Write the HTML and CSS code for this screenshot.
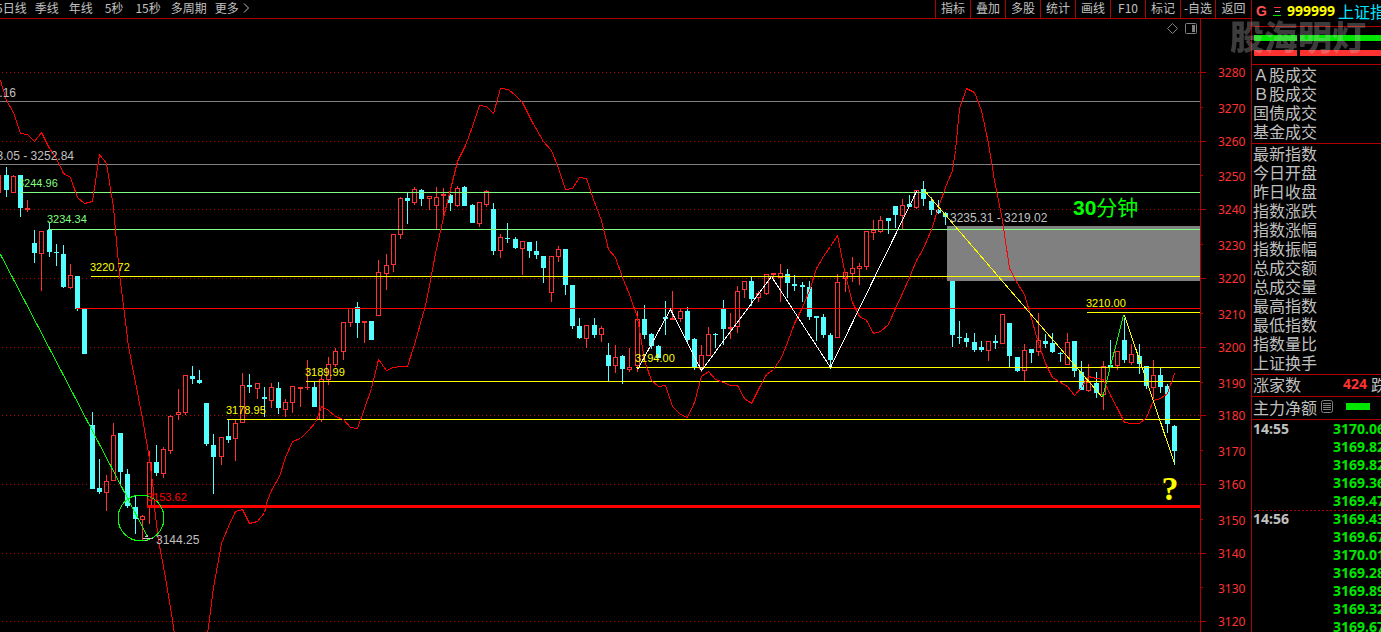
FILE: index.html
```html
<!DOCTYPE html>
<html lang="zh-CN">
<head>
<meta charset="utf-8">
<title>上证指数 999999</title>
<link rel="stylesheet" href="styles.css">
</head>
<body>
<div class="app">
  <main class="main">
    <header class="toolbar">
      <nav class="periods">
        <button type="button">5日线</button>
        <button type="button">季线</button>
        <button type="button" class="wide">年线</button>
        <button type="button" class="wide">5秒</button>
        <button type="button" class="wide">15秒</button>
        <button type="button">多周期</button>
        <button type="button" class="more">更多
          <svg width="7" height="10" viewBox="0 0 7 10" aria-hidden="true"><path d="M1 .5 5.5 5 1 9.5"/></svg>
        </button>
      </nav>
      <nav class="tools">
        <button type="button">指标</button>
        <button type="button">叠加</button>
        <button type="button">多股</button>
        <button type="button">统计</button>
        <button type="button">画线</button>
        <button type="button">F10</button>
        <button type="button">标记</button>
        <button type="button">-自选</button>
        <button type="button">返回</button>
      </nav>
    </header>
    <svg class="chart" viewBox="0 19 1251 613" role="img" aria-label="30分钟K线图">
      <g id="grid"></g>
      <rect class="gap" x="947" y="226" width="253" height="55"/>
      <g id="candles"></g>
      <g id="levels"></g>
      <g id="curves"></g>
      <g id="axis"></g>
      <circle class="trend green" cx="141" cy="518" r="23"/>
      <path class="mark" d="M143 538.500H153M147.500 535V537M145 536.500H147M145 540.500H147"/>
      <g class="corner">
        <path d="M1172.500 23.500 1177.500 28.500 1172.500 33.500 1167.500 28.500Z"/>
        <rect x="1185.500" y="23.500" width="11" height="10" rx="1"/>
        <rect class="solid" x="1192" y="25" width="3" height="7"/>
      </g>
      <g id="labels"></g>
    </svg>
  </main>

  <aside class="side">
    <div class="symbol">
      <span class="flag">G</span>
      <svg class="bars" width="9" height="10" viewBox="0 0 9 10" aria-hidden="true">
        <path class="r" d="M1 1.500h7"/><path class="w" d="M2 5.500h5"/><path class="g" d="M0 9.500h8"/>
      </svg>
      <span class="code">999999</span>
      <span class="name">上证指数</span>
    </div>
    <div class="meters">
      <div class="meter up"><i></i><i></i></div>
      <div class="meter down"><i></i><i></i></div>
      <div class="brand">股海明灯</div>
    </div>
    <ul class="stats">
      <li>Ａ股成交</li><li>Ｂ股成交</li><li>国债成交</li><li>基金成交</li>
    </ul>
    <ul class="stats">
      <li>最新指数</li><li>今日开盘</li><li>昨日收盘</li><li>指数涨跌</li>
      <li>指数涨幅</li><li>指数振幅</li><li>总成交额</li><li>总成交量</li>
      <li>最高指数</li><li>最低指数</li><li>指数量比</li><li>上证换手</li>
    </ul>
    <div class="breadth"><span>涨家数</span><b>424</b><span>跌</span></div>
    <div class="flow">
      <span>主力净额</span>
      <svg width="12" height="13" viewBox="0 0 12 13" aria-hidden="true"><rect x=".5" y=".5" width="11" height="12" rx="2"/><path d="M2 3.500h8M2 5.500h8M2 7.500h8M2 9.500h8"/></svg>
      <i></i>
    </div>
    <table class="ticks">
      <tbody>
        <tr><th scope="row">14:55</th><td>3170.06</td></tr>
        <tr><th></th><td>3169.82</td></tr>
        <tr><th></th><td>3169.82</td></tr>
        <tr><th></th><td>3169.36</td></tr>
        <tr><th></th><td>3169.47</td></tr>
      </tbody>
      <tbody class="minute">
        <tr><th scope="row">14:56</th><td>3169.43</td></tr>
        <tr><th></th><td>3169.67</td></tr>
        <tr><th></th><td>3170.01</td></tr>
        <tr><th></th><td>3169.28</td></tr>
        <tr><th></th><td>3169.89</td></tr>
        <tr><th></th><td>3169.32</td></tr>
        <tr><th></th><td>3169.67</td></tr>
      </tbody>
    </table>
  </aside>
</div>
<script src="chart.js"></script>
</body>
</html>
```
FILE: styles.css
```css
* { box-sizing: border-box; }

body {
  margin: 0;
  background: #000;
  color: #c0c0c0;
  font-family: "Noto Sans CJK SC", "Noto Sans", sans-serif;
  overflow: hidden;
}

.app {
  display: grid;
  grid-template-columns: minmax(0, 1fr) 130px;
  height: 100vh;
}

.main {
  display: flex;
  flex-direction: column;
  min-width: 0;
}

/* toolbar */
.toolbar {
  display: flex;
  justify-content: space-between;
  height: 19px;
  flex: none;
  border-bottom: 1px solid #b00000;
}

.toolbar button {
  padding: 0 0 2px;
  border: 0;
  background: none;
  color: inherit;
  font: 12px/16px "Noto Sans CJK SC", sans-serif;
  white-space: nowrap;
}

.periods {
  display: flex;
  gap: 8px;
  margin-left: -4px;
}

.periods .wide { padding: 0 2px 2px; }

.periods .more {
  display: flex;
  align-items: center;
  gap: 4px;
}

.more svg { fill: none; stroke: #c0c0c0; }

.tools {
  display: grid;
  grid-template-columns: repeat(8, 35px) 36px;
}

.tools button { border-left: 1px solid #b00000; }

/* chart */
.chart {
  display: block;
  width: 100%;
  height: auto;
  shape-rendering: crispEdges;
}

.grid { stroke: #b00000; stroke-dasharray: 1 3; }
.frame { fill: #b00000; }
.gap { fill: #808080; }
.candle-down { fill: #54ffff; }
.candle-up { fill: none; stroke: #ff3232; }
.wick-down { stroke: #54ffff; }
.wick-up { stroke: #ff3232; }
.trend { fill: none; }
.red { stroke: #f00; }
.green { stroke: #0f0; }
.white { stroke: #fff; }
.yellow { stroke: #ff0; }
.mark { fill: none; stroke: #c0c0c0; }
.corner { fill: none; stroke: #808080; shape-rendering: auto; }
.corner .solid { fill: #808080; stroke: none; }

.scale { fill: #ff3232; font: 12px "Noto Sans", sans-serif; }
.price { font: 11px "Liberation Sans", sans-serif; }
.note { fill: #c0c0c0; font: 12px "Liberation Sans", sans-serif; }
.title { fill: #0f0; font: 21px "Liberation Sans", "Noto Sans CJK SC", sans-serif; }
.title .num { font-weight: bold; }
.question { fill: #ff0; font: bold 34px "Liberation Serif", serif; }

/* quote panel */
.side {
  border-left: 1px solid #b00000;
  overflow: hidden;
  font-size: 16px;
  white-space: nowrap;
}

.symbol {
  display: flex;
  align-items: center;
  height: 27px;
  padding: 0 0 4px 4px;
  border-bottom: 1px solid #b00000;
  line-height: 22px;
}

.symbol > *, .breadth > * { flex: none; }

.flag { width: 17px; color: #ff5050; font: bold 14px "Liberation Sans", sans-serif; }
.bars { margin-right: 5px; }
.bars .r { stroke: #ff3232; }
.bars .w { stroke: #c0c0c0; }
.bars .g { stroke: #00e600; }
.code { width: 51px; color: #ff0; font: bold 14px/20px "Noto Sans", sans-serif; }
.name { color: #00e6ff; }

.meters {
  position: relative;
  display: flex;
  flex-direction: column;
  gap: 9px;
  height: 38px;
  padding: 8px 0 0 2px;
  border-bottom: 1px solid #b00000;
}

.meter { display: grid; grid-template-columns: 43px 1fr; gap: 3px; height: 6px; }
.up i { background: #00e600; }
.down i { background: #ff3232; }

.brand {
  position: fixed;
  right: 15px;
  top: 16px;
  color: rgba(200, 200, 200, .3);
  font-size: 34px;
  font-weight: 900;
  line-height: 40px;
}

.stats {
  margin: 0;
  padding: 0 1px 2px;
  border-bottom: 1px solid #b00000;
  list-style: none;
  line-height: 19px;
}

.breadth, .flow {
  display: flex;
  align-items: center;
  padding: 0 0 3px 1px;
  border-bottom: 1px solid #b00000;
  line-height: 18px;
}

.breadth { height: 22px; }
.breadth span:first-child { width: 90px; }
.breadth b { width: 28px; color: #ff3232; font: bold 14px/18px "Noto Sans", sans-serif; }

.flow { height: 23px; }
.flow svg { flex: none; margin: 0 13px 0 4px; fill: none; stroke: #808080; }
.flow i { flex: none; width: 24px; height: 7px; background: #00e600; }

.ticks {
  width: 100%;
  border-collapse: collapse;
  table-layout: fixed;
  font: bold 14px/18px "Noto Sans", sans-serif;
}

.ticks th, .ticks td { height: 18px; padding: 0; }
.ticks th { width: 81px; padding-left: 1px; text-align: left; }
.ticks td { color: #00e600; }

.minute {
  background: repeating-linear-gradient(to right, transparent 0 2px, #b00000 2px 4px) 0 0 / 100% 1px no-repeat;
}
```
FILE: chart.js
```js
// [x, high, low, bodyTop, bodyBottom, rising]
const candles = [
[-2,175,193,175,193,1],[6,167,197,175,190,0],[13,175,193,176,193,1],[20,175,217,175,208,0],[27,200,212,208,210,1],
[34,230,263,243,253,0],[41,231,291,231,254,1],[49,223,257,230,252,0],[56,244,266,252,253,0],[63,245,288,254,287,0],
[70,264,289,275,288,1],[77,276,311,276,309,0],[84,309,354,309,354,0],[92,412,489,425,489,0],[99,459,494,488,492,0],
[106,475,511,481,493,1],[113,423,481,435,481,1],[120,433,484,433,472,0],[127,469,508,474,506,0],[135,496,534,507,519,0],
[142,515,540,516,520,1],[149,451,524,462,506,1],[156,445,476,462,473,0],[163,447,478,449,474,1],[170,415,454,416,451,1],
[178,389,420,412,415,1],[185,375,415,375,413,1],[192,366,384,376,379,0],[199,370,384,380,383,0],[206,403,446,403,444,0],
[213,434,494,445,457,0],[221,437,465,437,457,1],[228,420,443,436,440,0],[235,420,461,423,439,1],[242,373,423,385,423,1],
[249,374,393,385,387,0],[257,383,399,383,389,1],[264,387,417,397,399,0],[271,383,408,387,401,1],[278,382,414,388,408,0],
[285,399,417,402,410,1],[292,386,413,386,403,1],[300,387,407,387,389,1],[307,360,390,387,388,1],[314,382,407,387,407,0],
[321,375,422,379,420,1],[328,357,385,364,380,1],[335,348,367,351,365,1],[343,322,360,322,352,1],[350,308,327,308,323,1],
[357,302,338,307,323,0],[364,321,343,321,323,1],[371,321,340,321,340,0],[378,260,316,272,316,1],[386,254,290,265,274,1],
[393,234,272,234,265,1],[400,197,239,198,235,1],[407,193,224,198,201,0],[414,187,205,189,203,1],[421,189,206,190,199,0],
[429,196,210,196,199,1],[436,187,229,197,206,1],[443,188,218,194,196,1],[450,194,211,195,203,0],[457,186,207,188,206,1],
[464,186,206,187,206,0],[472,204,223,205,223,0],[479,202,227,202,224,1],[486,190,207,191,205,1],[493,203,255,209,251,0],
[500,234,258,237,251,1],[507,223,243,238,239,0],[515,237,249,239,248,0],[522,241,275,241,249,1],[529,242,258,242,251,0],
[536,241,259,251,255,0],[543,256,283,256,268,0],[551,256,302,256,293,1],[558,246,262,249,257,1],[565,249,295,249,285,0],
[572,285,329,285,326,0],[579,318,339,326,338,0],[586,325,348,325,339,1],[594,318,338,325,335,0],[601,326,342,328,335,1],
[608,343,381,355,366,0],[615,345,373,357,366,1],[622,355,384,356,369,0],[629,348,372,367,370,1],[637,311,372,319,366,1],
[644,305,339,319,335,0],[651,333,349,334,346,0],[658,345,358,346,358,0],[665,301,335,317,319,0],[672,291,320,318,320,1],
[680,309,322,311,319,1],[687,307,344,311,340,0],[694,338,370,339,368,0],[701,345,372,355,369,1],[708,327,356,334,356,1],
[715,333,348,334,335,0],[723,300,345,309,329,0],[730,313,339,327,329,1],[737,286,333,291,327,1],[744,281,298,281,290,1],
[751,277,306,281,299,0],[758,291,302,293,298,1],[766,274,295,274,294,1],[773,273,279,273,275,1],[780,264,302,273,278,1],
[787,269,298,274,283,0],[794,275,291,284,286,0],[802,282,302,285,287,0],[809,281,320,287,317,0],[816,316,341,316,318,0],
[823,314,338,317,335,0],[830,333,369,335,360,0],[837,274,338,282,338,1],[845,272,292,272,279,1],[852,257,282,268,274,1],
[859,263,285,266,269,1],[866,231,270,231,267,1],[873,220,240,230,233,1],[880,216,233,220,232,1],[888,218,234,218,221,0],
[895,206,228,206,215,0],[902,199,229,205,216,1],[909,195,207,204,207,0],[916,190,209,190,208,1],[923,181,206,189,199,0],
[931,197,215,201,210,0],[938,200,214,210,213,0],[945,212,225,213,217,0],[952,281,347,281,335,0],[959,321,344,337,338,0],
[966,333,347,338,342,0],[974,333,352,342,350,0],[981,341,352,347,350,0],[988,341,361,341,351,1],[995,335,349,341,343,0],
[1002,314,344,314,344,1],[1009,323,368,323,356,0],[1017,357,372,357,371,0],[1024,344,381,350,371,1],[1031,349,363,349,353,0],
[1038,313,356,340,352,1],[1045,334,348,341,344,0],[1052,333,353,343,352,0],[1060,352,362,353,354,0],[1067,333,365,342,365,1],
[1074,341,377,341,371,0],[1081,361,390,372,390,0],[1088,364,392,382,391,1],[1096,372,398,383,393,0],[1103,361,410,366,395,1],
[1110,340,368,365,368,0],[1117,351,370,351,366,1],[1124,318,363,340,360,0],[1131,344,365,354,363,1],[1139,344,374,356,364,0],
[1146,366,389,366,386,0],[1153,360,399,375,388,1],[1160,368,393,375,387,0],[1167,384,433,386,424,0],[1174,425,465,426,451,0]
];

// [x1, y, thickness, colour]
const levels = [
[0,101,1,'#808080'],[0,164,1,'#808080'],[20,192,1,'#80ff80'],[48,229,1,'#80ff80'],[91,276,1,'#ffff00'],
[76,308,1,'#ff0000'],[636,367,1,'#ffff00'],[306,381,1,'#ffff00'],[227,419,1,'#ffff00'],[1087,312,1,'#ffff00'],
[147,505,3,'#ff0000']
];

const curves = [
['red','0,80 6,100 13,112 20,133 27,134 34,141 41,132 49,148 56,158 63,173 70,177 77,197 84,203 92,201 99,154 106,163 113,207 115,230 119,273 128,346 135,382 142,418 149,458 153,490 154,507 158,540 165,577 171,613 174,634'],
['red','207,634 213,587 221,543 228,526 235,511 242,509 249,523 257,521 264,512 267,500 271,490 279,476 285,457 292,441 300,438 308,430 315,422 321,406 328,410 335,416 343,419 350,427 357,428 364,408 371,388 378,359 386,370 393,367 400,366 407,366 414,344 425,305 430,280 435,253 443,217 450,189 457,161 465,145 472,126 479,105 486,106 493,113 500,88 508,89 515,95 522,102 532,122 543,141 551,150 558,168 565,189 572,188 579,177 586,178 593,199 601,220 608,249 615,257 622,277 629,294 637,317 644,360 651,380 658,386 665,385 672,406 680,414 687,417 694,402 701,376 708,371 715,379 723,382 730,385 737,385 744,398 751,403 759,387 766,374 773,369 781,357 787,342 794,323 802,307 809,290 816,268 823,256 830,246 837,235 845,275 852,302 859,316 866,320 873,333 880,331 888,324 895,308 902,293 909,277 916,260 923,248 931,229 938,207 945,187 952,170 955,150 959,108 966,88 974,92 981,110 988,143 994,180 1002,220 1009,268 1017,283 1024,294 1031,318 1038,343 1045,363 1052,377 1060,382 1067,386 1074,395 1081,387 1088,376 1096,378 1103,379 1110,395 1117,408 1124,422 1131,423 1139,423 1146,417 1153,400 1160,398 1167,393 1174,373'],
['green','0,254 147,536'],
['white','637,369 670,309 701,370 771,276 830,367 916,191'],
['yellow','923,189 1102,397'],
['green','1102,397 1123,315'],
['yellow','1124,315 1174,463']
];

// [x, baseline, text, class, fill, anchor]
const labels = [
[16,97,'.16','note','','end'],[74,160,'3.05 - 3252.84','note','','end'],
[18,187,'3244.96','price','#80ff80'],[47,223,'3234.34','price','#80ff80'],
[90,271,'3220.72','price','#ffff00'],[226,414,'3178.95','price','#ffff00'],
[305,376,'3189.99','price','#ffff00'],[635,362,'3194.00','price','#ffff00'],
[1086,307,'3210.00','price','#ffff00'],[147,501,'3153.62','price','#ff0000'],
[156,544,'3144.25','note'],[950,222,'3235.31 - 3219.02','note'],
[1170,500,'?','question','','middle']
];

const gridY = [72,141,209,278,347,415,484,553,621];
const minorY = [107,175,244,313,382,450,519,587];

const put = (id, html) => { document.getElementById(id).innerHTML = html; };
const rect = (x, y, w, h, attrs) => `<rect x="${x}" y="${y}" width="${w}" height="${h}" ${attrs}/>`;

put('grid', gridY.map(y => `<path class="grid" d="M2 ${y + .5}H1200"/>`).join(''));

put('candles', candles.map(([x, hi, lo, top, bottom, up]) => {
  const c = x + .5;
  const wick = `<path class="wick-${up ? 'up' : 'down'}" d="M${c} ${hi}V${top}M${c} ${bottom}V${lo}"/>`;
  const body = up
    ? rect(x - 1.5, top + .5, 4, bottom - top - 1, 'class="candle-up"')
    : rect(x - 2, top, 5, bottom - top, 'class="candle-down"');
  const flat = up && bottom - top === 1 ? `<path class="wick-up" d="M${x - 2} ${top + .5}h5"/>` : '';
  return wick + body + flat;
}).join(''));

put('levels', levels.map(([x, y, h, fill]) => rect(x, y, 1200 - x, h, `fill="${fill}"`)).join(''));

put('curves', curves.map(([cls, pts]) =>
  `<polyline class="trend ${cls}" transform="translate(.5 .5)" points="${pts}"/>`).join(''));

put('axis', rect(1200, 19, 1, 613, 'class="frame"')
  + gridY.map(y => rect(1201, y, 5, 1, 'class="frame"')).join('')
  + minorY.map(y => rect(1201, y, 2, 1, 'class="frame"')).join('')
  + Array.from({ length: 17 }, (_, i) => {
      const y = i % 2 ? minorY[(i - 1) / 2] + 1 : gridY[i / 2];
      return `<text class="scale" x="1218" y="${y + 5}">${3280 - i * 10}</text>`;
    }).join(''));

put('labels', labels.map(([x, y, text, cls, fill, anchor]) =>
  `<text class="${cls}" x="${x}" y="${y}"${fill ? ` fill="${fill}"` : ''} text-anchor="${anchor || 'start'}">${text}</text>`).join('')
  + '<text class="title" x="1073" y="215"><tspan class="num">30</tspan>分钟</text>');
```
